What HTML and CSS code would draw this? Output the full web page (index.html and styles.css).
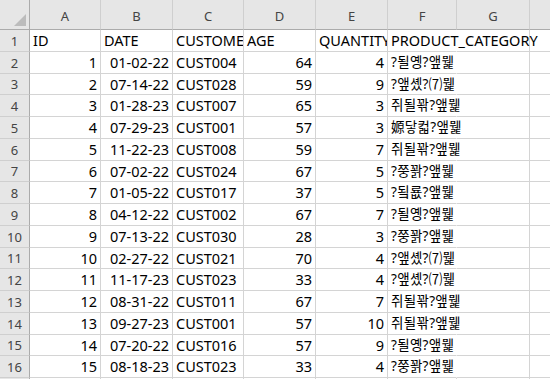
FILE: index.html
```html
<!DOCTYPE html>
<html lang="ko">
<head>
<meta charset="utf-8">
<title>Sheet</title>
<link rel="stylesheet" href="styles.css">
</head>
<body>
<div class="sheet">
  <div class="corner"><span class="tri"></span></div>
  <div class="ch">A</div><div class="ch">B</div><div class="ch">C</div><div class="ch">D</div><div class="ch">E</div><div class="ch">F</div><div class="ch">G</div><div class="ch"></div>

  <div class="rh">1</div><div class="c">ID</div><div class="c">DATE</div><div class="c">CUSTOMER_ID</div><div class="c">AGE</div><div class="c">QUANTITY</div><div class="c spill">PRODUCT_CATEGORY</div><div class="c"></div><div class="c"></div>
  <div class="rh">2</div><div class="c n">1</div><div class="c n">01-02-22</div><div class="c">CUST004</div><div class="c n">64</div><div class="c n">4</div><div class="c spill ko">?될옝?앺뭹</div><div class="c"></div><div class="c"></div>
  <div class="rh">3</div><div class="c n">2</div><div class="c n">07-14-22</div><div class="c">CUST028</div><div class="c n">59</div><div class="c n">9</div><div class="c spill ko">?앺솄?⑺뭹</div><div class="c"></div><div class="c"></div>
  <div class="rh">4</div><div class="c n">3</div><div class="c n">01-28-23</div><div class="c">CUST007</div><div class="c n">65</div><div class="c n">3</div><div class="c spill ko">쥐될꽊?앺뭹</div><div class="c"></div><div class="c"></div>
  <div class="rh">5</div><div class="c n">4</div><div class="c n">07-29-23</div><div class="c">CUST001</div><div class="c n">57</div><div class="c n">3</div><div class="c spill ko">嫄닿컯?앺뭹</div><div class="c"></div><div class="c"></div>
  <div class="rh">6</div><div class="c n">5</div><div class="c n">11-22-23</div><div class="c">CUST008</div><div class="c n">59</div><div class="c n">7</div><div class="c spill ko">쥐될꽊?앺뭹</div><div class="c"></div><div class="c"></div>
  <div class="rh">7</div><div class="c n">6</div><div class="c n">07-02-22</div><div class="c">CUST024</div><div class="c n">67</div><div class="c n">5</div><div class="c spill ko">?쭝꽑?앺뭹</div><div class="c"></div><div class="c"></div>
  <div class="rh">8</div><div class="c n">7</div><div class="c n">01-05-22</div><div class="c">CUST017</div><div class="c n">37</div><div class="c n">5</div><div class="c spill ko">?됰룞?앺뭹</div><div class="c"></div><div class="c"></div>
  <div class="rh">9</div><div class="c n">8</div><div class="c n">04-12-22</div><div class="c">CUST002</div><div class="c n">67</div><div class="c n">7</div><div class="c spill ko">?될옝?앺뭹</div><div class="c"></div><div class="c"></div>
  <div class="rh">10</div><div class="c n">9</div><div class="c n">07-13-22</div><div class="c">CUST030</div><div class="c n">28</div><div class="c n">3</div><div class="c spill ko">?쭝꽑?앺뭹</div><div class="c"></div><div class="c"></div>
  <div class="rh">11</div><div class="c n">10</div><div class="c n">02-27-22</div><div class="c">CUST021</div><div class="c n">70</div><div class="c n">4</div><div class="c spill ko">?앺솄?⑺뭹</div><div class="c"></div><div class="c"></div>
  <div class="rh">12</div><div class="c n">11</div><div class="c n">11-17-23</div><div class="c">CUST023</div><div class="c n">33</div><div class="c n">4</div><div class="c spill ko">?앺솄?⑺뭹</div><div class="c"></div><div class="c"></div>
  <div class="rh">13</div><div class="c n">12</div><div class="c n">08-31-22</div><div class="c">CUST011</div><div class="c n">67</div><div class="c n">7</div><div class="c spill ko">쥐될꽊?앺뭹</div><div class="c"></div><div class="c"></div>
  <div class="rh">14</div><div class="c n">13</div><div class="c n">09-27-23</div><div class="c">CUST001</div><div class="c n">57</div><div class="c n">10</div><div class="c spill ko">쥐될꽊?앺뭹</div><div class="c"></div><div class="c"></div>
  <div class="rh">15</div><div class="c n">14</div><div class="c n">07-20-22</div><div class="c">CUST016</div><div class="c n">57</div><div class="c n">9</div><div class="c spill ko">?될옝?앺뭹</div><div class="c"></div><div class="c"></div>
  <div class="rh">16</div><div class="c n">15</div><div class="c n">08-18-23</div><div class="c">CUST023</div><div class="c n">33</div><div class="c n">4</div><div class="c spill ko">?쭝꽑?앺뭹</div><div class="c"></div><div class="c"></div>
  <div class="rh">17</div><div class="c"></div><div class="c"></div><div class="c"></div><div class="c"></div><div class="c"></div><div class="c"></div><div class="c"></div><div class="c"></div>
</div>
</body>
</html>
```
FILE: styles.css
```css
html, body {
  margin: 0;
  padding: 0;
  background: #ffffff;
  overflow: hidden;
}
.sheet {
  display: grid;
  grid-template-columns: 30px 71px 72px 71px 72px 72px 69px 73px 60px;
  grid-template-rows: 30px repeat(17, 21.75px);
  width: 610px;
  font-family: "Noto Sans", "Noto Sans CJK KR", sans-serif;
  font-size: 14.5px;
  color: #000;
}
.corner {
  position: relative;
  background: #e6e6e6;
  border-right: 1px solid #ababab;
  border-bottom: 1px solid #ababab;
  box-sizing: border-box;
}
.tri {
  position: absolute;
  right: 3px;
  bottom: 3px;
  width: 0;
  height: 0;
  border-style: solid;
  border-width: 0 0 12px 12px;
  border-color: transparent transparent #bcbcbc transparent;
}
.ch {
  background: #e6e6e6;
  border-right: 1px solid #cfcfcf;
  border-bottom: 1px solid #ababab;
  box-sizing: border-box;
  display: flex;
  align-items: center;
  justify-content: center;
  padding-top: 3px;
  font-family: "Noto Sans", sans-serif;
  font-size: 13px;
  color: #444;
}
.rh {
  background: #e6e6e6;
  border-right: 1px solid #ababab;
  border-bottom: 1px solid #cfcfcf;
  box-sizing: border-box;
  display: flex;
  align-items: center;
  justify-content: center;
  font-family: "Noto Sans", sans-serif;
  font-size: 13px;
  color: #444;
  padding-top: 1px;
}
.c {
  border-right: 1px solid #d4d4d4;
  border-bottom: 1px solid #d4d4d4;
  box-sizing: border-box;
  line-height: 21.75px;
  white-space: nowrap;
  overflow: hidden;
  padding: 0 2px 0 3px;
}
.n {
  text-align: right;
  padding-right: 3px;
}
.spill {
  overflow: visible;
  position: relative;
  z-index: 1;
  border-right-color: transparent;
}
.ko {
  font-size: 13.5px;
  letter-spacing: 0.3px;
}
```
